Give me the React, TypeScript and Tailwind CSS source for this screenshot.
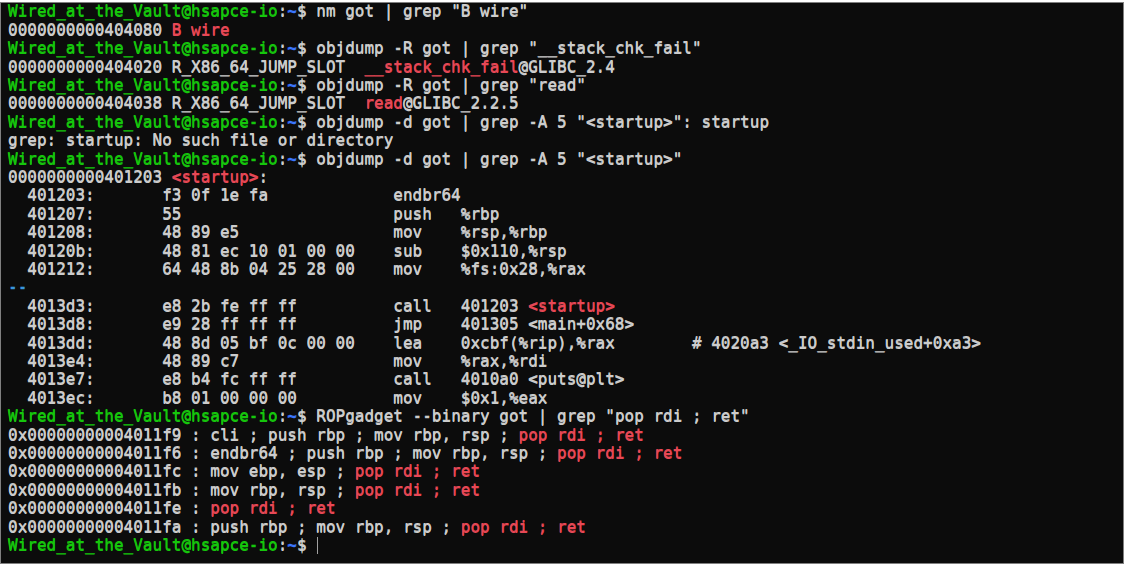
import React from "react";

const G = "text-[#16c60c]";
const B = "text-[#3b78ff]";
const R = "text-[#e74856]";

function Prompt({ cmd, cursor }: { cmd?: string; cursor?: boolean }) {
  return (
    <>
      <span className={G}>Wired_at_the_Vault@hsapce-io</span>
      <span>:</span>
      <span className={B}>~</span>
      <span>$ </span>
      {cmd && <span>{cmd}</span>}
      {cursor && (
        <span className="inline-block w-[1px] h-[17px] bg-[#a0a0a0] align-[-4px] ml-[1px]" />
      )}
    </>
  );
}

const red = (t: string) => <span className={R}>{t}</span>;

export default function App() {
  const lines: React.ReactNode[] = [
    <Prompt cmd={'nm got | grep "B wire"'} />,
    <>0000000000404080 {red("B wire")}</>,
    <Prompt cmd={'objdump -R got | grep "__stack_chk_fail"'} />,
    <>
      {"0000000000404020 R_X86_64_JUMP_SLOT  "}
      {red("__stack_chk_fail")}@GLIBC_2.4
    </>,
    <Prompt cmd={'objdump -R got | grep "read"'} />,
    <>
      {"0000000000404038 R_X86_64_JUMP_SLOT  "}
      {red("read")}@GLIBC_2.2.5
    </>,
    <Prompt cmd={'objdump -d got | grep -A 5 "<startup>": startup'} />,
    <>grep: startup: No such file or directory</>,
    <Prompt cmd={'objdump -d got | grep -A 5 "<startup>"'} />,
    <>
      {"0000000000401203 "}
      {red("<startup>")}:
    </>,
    <>{"  401203:       f3 0f 1e fa             endbr64"}</>,
    <>{"  401207:       55                      push   %rbp"}</>,
    <>{"  401208:       48 89 e5                mov    %rsp,%rbp"}</>,
    <>{"  40120b:       48 81 ec 10 01 00 00    sub    $0x110,%rsp"}</>,
    <>{"  401212:       64 48 8b 04 25 28 00    mov    %fs:0x28,%rax"}</>,
    <span className="text-[#3a96dd]">--</span>,
    <>
      {"  4013d3:       e8 2b fe ff ff          call   401203 "}
      {red("<startup>")}
    </>,
    <>{"  4013d8:       e9 28 ff ff ff          jmp    401305 <main+0x68>"}</>,
    <>
      {"  4013dd:       48 8d 05 bf 0c 00 00    lea    0xcbf(%rip),%rax        # 4020a3 <_IO_stdin_used+0xa3>"}
    </>,
    <>{"  4013e4:       48 89 c7                mov    %rax,%rdi"}</>,
    <>{"  4013e7:       e8 b4 fc ff ff          call   4010a0 <puts@plt>"}</>,
    <>{"  4013ec:       b8 01 00 00 00          mov    $0x1,%eax"}</>,
    <Prompt cmd={'ROPgadget --binary got | grep "pop rdi ; ret"'} />,
    <>
      {"0x00000000004011f9 : cli ; push rbp ; mov rbp, rsp ; "}
      {red("pop rdi ; ret")}
    </>,
    <>
      {"0x00000000004011f6 : endbr64 ; push rbp ; mov rbp, rsp ; "}
      {red("pop rdi ; ret")}
    </>,
    <>
      {"0x00000000004011fc : mov ebp, esp ; "}
      {red("pop rdi ; ret")}
    </>,
    <>
      {"0x00000000004011fb : mov rbp, rsp ; "}
      {red("pop rdi ; ret")}
    </>,
    <>
      {"0x00000000004011fe : "}
      {red("pop rdi ; ret")}
    </>,
    <>
      {"0x00000000004011fa : push rbp ; mov rbp, rsp ; "}
      {red("pop rdi ; ret")}
    </>,
    <Prompt cursor />,
  ];

  return (
    <div className="w-[1126px] h-[566px] bg-white overflow-hidden">
      <div className="mt-[2px] w-[1124px] h-[562px] border border-[#808080] bg-[#0c0c0c] text-[#cccccc] whitespace-pre font-['DejaVu_Sans_Mono',monospace] text-[16px] pl-[7px] overflow-hidden [-webkit-text-stroke:0.2px]">
        <div className="-mt-[2px] [text-shadow:0_0.7px_0_currentColor]">
          {lines.map((ln, i) => (
            <div
              key={i}
              className={
                i % 5 === 0 || i % 5 === 2
                  ? "h-[19px] leading-[19px]"
                  : "h-[18px] leading-[19px]"
              }
            >
              {ln}
            </div>
          ))}
        </div>
      </div>
    </div>
  );
}
